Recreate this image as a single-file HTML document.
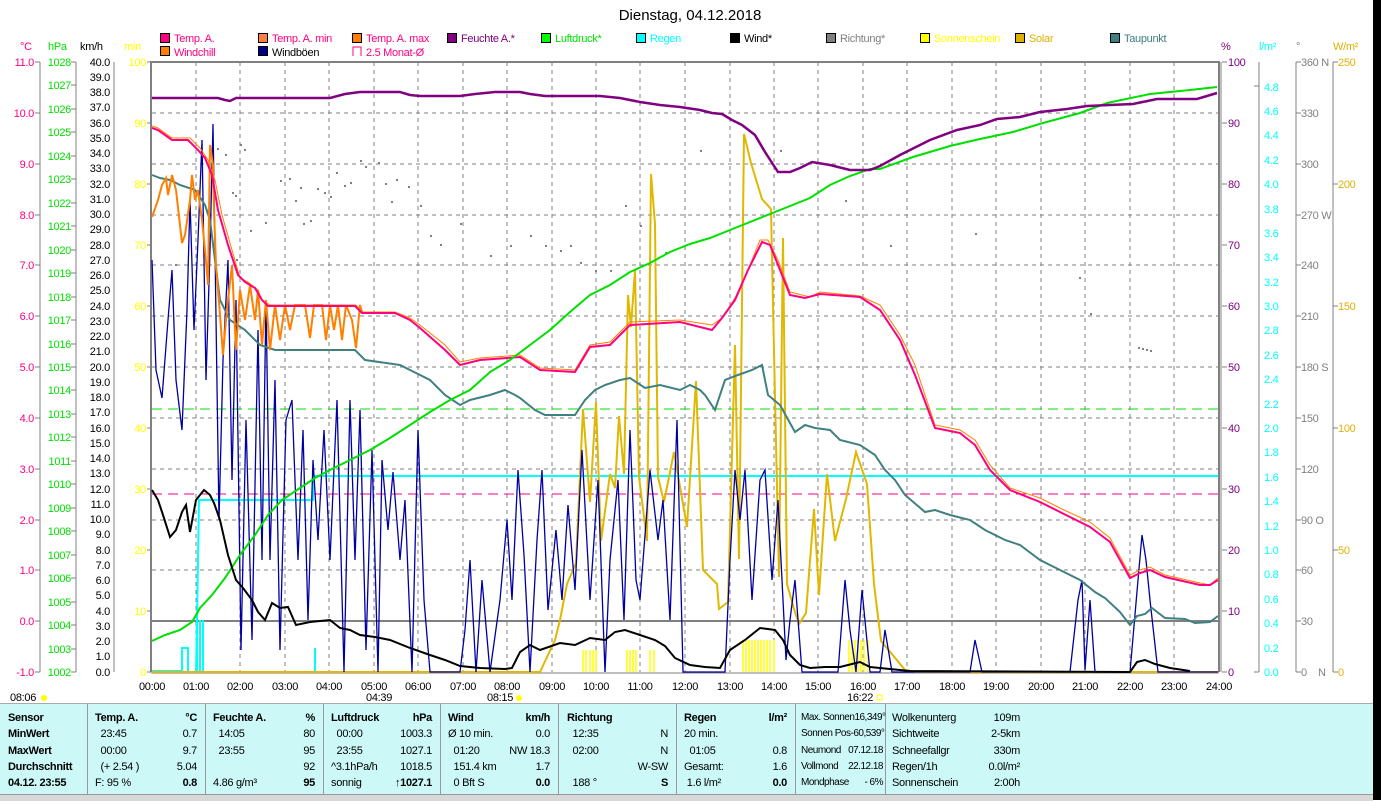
<!DOCTYPE html>
<html><head><meta charset="utf-8"><style>
html,body{margin:0;padding:0;background:#fff;width:1381px;height:800px;overflow:hidden;font-family:"Liberation Sans",sans-serif}
svg{display:block}
text{font-family:"Liberation Sans",sans-serif;font-size:11px;letter-spacing:-0.3px}
.tb{position:absolute;left:0;top:703px;width:1373px;height:90px;background:#ccf8f8;border-top:1px solid #aaa}
.c{position:absolute;top:0;height:90px;font-size:11px;line-height:16.3px;padding-top:6px;box-sizing:border-box;border-right:1px solid #999;letter-spacing:-0.3px}
.r{display:flex;justify-content:space-between;white-space:pre}
.b{font-weight:bold}
</style></head><body>
<div style="position:absolute;left:1373px;top:0;width:8px;height:800px;background:#000"></div>
<svg width="1373" height="703" style="position:absolute;left:0;top:0">
<text x="690" y="20" text-anchor="middle" style="font-size:15px;letter-spacing:0">Dienstag, 04.12.2018</text>
<g stroke="#000" stroke-width="1">
<rect x="160.5" y="33.5" width="9" height="9" fill="#ff0080"/><rect x="258.5" y="33.5" width="9" height="9" fill="#ff8040"/><rect x="352.5" y="33.5" width="9" height="9" fill="#ff8000"/><rect x="447.5" y="33.5" width="9" height="9" fill="#800080"/><rect x="541.5" y="33.5" width="9" height="9" fill="#00ff00"/><rect x="636.5" y="33.5" width="9" height="9" fill="#00ffff"/><rect x="730.5" y="33.5" width="9" height="9" fill="#000"/><rect x="826.5" y="33.5" width="9" height="9" fill="#808080"/><rect x="920.5" y="33.5" width="9" height="9" fill="#ffff00"/><rect x="1015.5" y="33.5" width="9" height="9" fill="#e0b000"/><rect x="1110.5" y="33.5" width="9" height="9" fill="#408080"/>
<rect x="160.5" y="46.5" width="9" height="9" fill="#ff8000"/><rect x="258.5" y="46.5" width="9" height="9" fill="#000080"/>
</g>
<path d="M353 56V47h8v9" fill="none" stroke="#ff0080"/>
<g>
<text x="174" y="42" fill="#ff0080">Temp. A.</text><text x="272" y="42" fill="#ff0080">Temp. A. min</text><text x="366" y="42" fill="#ff0080">Temp. A. max</text><text x="461" y="42" fill="#800080">Feuchte A.*</text><text x="555" y="42" fill="#00e000">Luftdruck*</text><text x="650" y="42" fill="#00ffff">Regen</text><text x="744" y="42">Wind*</text><text x="840" y="42" fill="#808080">Richtung*</text><text x="934" y="42" fill="#ffff00">Sonnenschein</text><text x="1029" y="42" fill="#e0b000">Solar</text><text x="1124" y="42" fill="#408080">Taupunkt</text>
<text x="174" y="56" fill="#ff0080">Windchill</text><text x="272" y="56">Windböen</text><text x="366" y="56" fill="#ff0080">2.5 Monat-Ø</text>
</g>
<text x="20" y="50" fill="#ff0080">°C</text><text x="48" y="50" fill="#00e000">hPa</text><text x="80" y="50">km/h</text><text x="124" y="50" fill="#ffff00">min</text>
<text x="1221" y="50" fill="#800080">%</text><text x="1259" y="50" fill="#00ffff">l/m²</text><text x="1296" y="50" fill="#808080">°</text><text x="1333" y="50" fill="#e0b000">W/m²</text>
<g stroke="#808080" stroke-dasharray="4,4" stroke-width="1">
<path d="M152 113H1218M152 164H1218M152 215H1218M152 265H1218M152 316H1218M152 367H1218M152 418H1218M152 469H1218M152 520H1218M152 570H1218"/>
<path d="M196 62V672M240 62V672M285 62V672M329 62V672M374 62V672M418 62V672M463 62V672M507 62V672M552 62V672M596 62V672M640 62V672M685 62V672M730 62V672M774 62V672M818 62V672M863 62V672M907 62V672M952 62V672M996 62V672M1041 62V672M1085 62V672M1130 62V672M1174 62V672"/>
</g>
<path d="M152 621H1218" stroke="#808080" stroke-width="2"/>
<path d="M152 409H1218" stroke="#00e000" stroke-dasharray="10,6"/>
<path d="M152 494H1218" stroke="#ff0080" stroke-dasharray="10,6"/>
<path d="M151 672V62H1219V672" fill="none" stroke="#808080" stroke-width="2"/>
<path d="M1221 62V672" stroke="#808080" stroke-width="1"/>
<path d="M151 673H1219" stroke="#808080" stroke-width="1"/>
<g stroke="#808080" fill="none"><path d="M40 62V672M35 62h5M35 113h5M35 164h5M35 215h5M35 265h5M35 316h5M35 367h5M35 418h5M35 469h5M35 520h5M35 570h5M35 621h5M35 672h5"/>
<path d="M76 62V672M71 62h5M71 85h5M71 109h5M71 132h5M71 156h5M71 179h5M71 203h5M71 226h5M71 250h5M71 273h5M71 297h5M71 320h5M71 344h5M71 367h5M71 390h5M71 414h5M71 437h5M71 461h5M71 484h5M71 508h5M71 531h5M71 555h5M71 578h5M71 602h5M71 625h5M71 649h5M71 672h5"/>
<path d="M114 62V672"/>
<path d="M147 62h4M147 123h4M147 184h4M147 245h4M147 306h4M147 367h4M147 428h4M147 489h4M147 550h4M147 611h4M147 672h4"/>
<path d="M1222 62h5M1222 123h5M1222 184h5M1222 245h5M1222 306h5M1222 367h5M1222 428h5M1222 489h5M1222 550h5M1222 611h5M1222 672h5"/>
<path d="M1259 62V672M1254 86h5M1254 672h5"/><path d="M1296 62V672M1296 62h5M1296 113h5M1296 164h5M1296 215h5M1296 265h5M1296 316h5M1296 367h5M1296 418h5M1296 469h5M1296 520h5M1296 570h5M1296 621h5M1296 672h5"/><path d="M1333 62V672M1333 62h5M1333 184h5M1333 306h5M1333 428h5M1333 550h5M1333 672h5"/>
</g>
<g text-anchor="end" fill="#ff0080">
<text x="34" y="66">11.0</text><text x="34" y="117">10.0</text><text x="34" y="168">9.0</text><text x="34" y="219">8.0</text><text x="34" y="269">7.0</text><text x="34" y="320">6.0</text><text x="34" y="371">5.0</text><text x="34" y="422">4.0</text><text x="34" y="473">3.0</text><text x="34" y="524">2.0</text><text x="34" y="574">1.0</text><text x="34" y="625">0.0</text><text x="34" y="676">-1.0</text>
</g>
<g text-anchor="end" fill="#00e000" style="font-size:10.5px">
<text x="71" y="66">1028</text><text x="71" y="89">1027</text><text x="71" y="113">1026</text><text x="71" y="136">1025</text><text x="71" y="160">1024</text><text x="71" y="183">1023</text><text x="71" y="207">1022</text><text x="71" y="230">1021</text><text x="71" y="254">1020</text><text x="71" y="277">1019</text><text x="71" y="301">1018</text><text x="71" y="324">1017</text><text x="71" y="348">1016</text><text x="71" y="371">1015</text><text x="71" y="394">1014</text><text x="71" y="418">1013</text><text x="71" y="441">1012</text><text x="71" y="465">1011</text><text x="71" y="488">1010</text><text x="71" y="512">1009</text><text x="71" y="535">1008</text><text x="71" y="559">1007</text><text x="71" y="582">1006</text><text x="71" y="606">1005</text><text x="71" y="629">1004</text><text x="71" y="653">1003</text><text x="71" y="676">1002</text>
</g>
<g text-anchor="end" style="font-size:10.5px">
<text x="110" y="66">40.0</text><text x="110" y="81">39.0</text><text x="110" y="96">38.0</text><text x="110" y="111">37.0</text><text x="110" y="127">36.0</text><text x="110" y="142">35.0</text><text x="110" y="157">34.0</text><text x="110" y="172">33.0</text><text x="110" y="188">32.0</text><text x="110" y="203">31.0</text><text x="110" y="218">30.0</text><text x="110" y="233">29.0</text><text x="110" y="249">28.0</text><text x="110" y="264">27.0</text><text x="110" y="279">26.0</text><text x="110" y="294">25.0</text><text x="110" y="310">24.0</text><text x="110" y="325">23.0</text><text x="110" y="340">22.0</text><text x="110" y="355">21.0</text><text x="110" y="371">20.0</text><text x="110" y="386">19.0</text><text x="110" y="401">18.0</text><text x="110" y="416">17.0</text><text x="110" y="432">16.0</text><text x="110" y="447">15.0</text><text x="110" y="462">14.0</text><text x="110" y="477">13.0</text><text x="110" y="493">12.0</text><text x="110" y="508">11.0</text><text x="110" y="523">10.0</text><text x="110" y="538">9.0</text><text x="110" y="554">8.0</text><text x="110" y="569">7.0</text><text x="110" y="584">6.0</text><text x="110" y="599">5.0</text><text x="110" y="615">4.0</text><text x="110" y="630">3.0</text><text x="110" y="645">2.0</text><text x="110" y="660">1.0</text><text x="110" y="676">0.0</text>
</g>
<g text-anchor="end" fill="#ffff00">
<text x="146" y="66">100</text><text x="146" y="127">90</text><text x="146" y="188">80</text><text x="146" y="249">70</text><text x="146" y="310">60</text><text x="146" y="371">50</text><text x="146" y="432">40</text><text x="146" y="493">30</text><text x="146" y="554">20</text><text x="146" y="615">10</text><text x="146" y="676">0</text>
</g>
<g fill="#800080">
<text x="1228" y="66">100</text><text x="1228" y="127">90</text><text x="1228" y="188">80</text><text x="1228" y="249">70</text><text x="1228" y="310">60</text><text x="1228" y="371">50</text><text x="1228" y="432">40</text><text x="1228" y="493">30</text><text x="1228" y="554">20</text><text x="1228" y="615">10</text><text x="1228" y="676">0</text>
</g>
<g fill="#00ffff">
<text x="1264" y="91">4.8</text><text x="1264" y="115">4.6</text><text x="1264" y="139">4.4</text><text x="1264" y="164">4.2</text><text x="1264" y="188">4.0</text><text x="1264" y="213">3.8</text><text x="1264" y="237">3.6</text><text x="1264" y="261">3.4</text><text x="1264" y="286">3.2</text><text x="1264" y="310">3.0</text><text x="1264" y="334">2.8</text><text x="1264" y="359">2.6</text><text x="1264" y="383">2.4</text><text x="1264" y="408">2.2</text><text x="1264" y="432">2.0</text><text x="1264" y="456">1.8</text><text x="1264" y="481">1.6</text><text x="1264" y="505">1.4</text><text x="1264" y="530">1.2</text><text x="1264" y="554">1.0</text><text x="1264" y="578">0.8</text><text x="1264" y="603">0.6</text><text x="1264" y="627">0.4</text><text x="1264" y="652">0.2</text><text x="1264" y="676">0.0</text>
</g>
<g fill="#808080">
<text x="1301" y="66">360 N</text><text x="1301" y="117">330</text><text x="1301" y="168">300</text><text x="1301" y="219">270 W</text><text x="1301" y="269">240</text><text x="1301" y="320">210</text><text x="1301" y="371">180 S</text><text x="1301" y="422">150</text><text x="1301" y="473">120</text><text x="1301" y="524">90  O</text><text x="1301" y="574">60</text><text x="1301" y="625">30</text><text x="1301" y="676">0</text><text x="1318" y="676">N</text>
</g>
<g fill="#e0b000">
<text x="1338" y="66">250</text><text x="1338" y="188">200</text><text x="1338" y="310">150</text><text x="1338" y="432">100</text><text x="1338" y="554">50</text><text x="1338" y="676">0</text>
</g>
<g text-anchor="middle">
<text x="152" y="690">00:00</text><text x="196" y="690">01:00</text><text x="240" y="690">02:00</text><text x="285" y="690">03:00</text><text x="329" y="690">04:00</text><text x="374" y="690">05:00</text><text x="418" y="690">06:00</text><text x="463" y="690">07:00</text><text x="507" y="690">08:00</text><text x="552" y="690">09:00</text><text x="596" y="690">10:00</text><text x="640" y="690">11:00</text><text x="685" y="690">12:00</text><text x="730" y="690">13:00</text><text x="774" y="690">14:00</text><text x="818" y="690">15:00</text><text x="863" y="690">16:00</text><text x="907" y="690">17:00</text><text x="952" y="690">18:00</text><text x="996" y="690">19:00</text><text x="1041" y="690">20:00</text><text x="1085" y="690">21:00</text><text x="1130" y="690">22:00</text><text x="1174" y="690">23:00</text><text x="1219" y="690">24:00</text>
</g>
<text x="10" y="701">08:06</text><circle cx="44" cy="698" r="3" fill="#ffff00"/>
<text x="366" y="701">04:39</text><text x="487" y="701">08:15</text><circle cx="519" cy="698" r="3" fill="#ffff00"/><text x="847" y="701">16:22</text><rect x="877" y="695" width="5" height="5" fill="none" stroke="#ffff00"/>
<g fill="#808080">
<rect x="217" y="148" width="2" height="2"/><rect x="225" y="154" width="2" height="2"/><rect x="240" y="144" width="2" height="2"/><rect x="244" y="149" width="2" height="2"/><rect x="235" y="195" width="2" height="2"/><rect x="236" y="259" width="2" height="2"/><rect x="232" y="192" width="2" height="2"/><rect x="175" y="264" width="2" height="2"/><rect x="250" y="230" width="2" height="2"/><rect x="265" y="222" width="2" height="2"/><rect x="280" y="180" width="2" height="2"/><rect x="289" y="178" width="2" height="2"/><rect x="300" y="187" width="2" height="2"/><rect x="295" y="200" width="2" height="2"/><rect x="303" y="223" width="2" height="2"/><rect x="310" y="220" width="2" height="2"/><rect x="317" y="188" width="2" height="2"/><rect x="324" y="192" width="2" height="2"/><rect x="330" y="196" width="2" height="2"/><rect x="336" y="172" width="2" height="2"/><rect x="344" y="185" width="2" height="2"/><rect x="350" y="182" width="2" height="2"/><rect x="360" y="160" width="2" height="2"/><rect x="365" y="166" width="2" height="2"/><rect x="378" y="162" width="2" height="2"/><rect x="385" y="183" width="2" height="2"/><rect x="391" y="201" width="2" height="2"/><rect x="396" y="179" width="2" height="2"/><rect x="408" y="186" width="2" height="2"/><rect x="420" y="205" width="2" height="2"/><rect x="430" y="235" width="2" height="2"/><rect x="440" y="244" width="2" height="2"/><rect x="460" y="223" width="2" height="2"/><rect x="490" y="255" width="2" height="2"/><rect x="510" y="245" width="2" height="2"/><rect x="530" y="235" width="2" height="2"/><rect x="545" y="245" width="2" height="2"/><rect x="560" y="250" width="2" height="2"/><rect x="570" y="245" width="2" height="2"/><rect x="580" y="262" width="2" height="2"/><rect x="595" y="270" width="2" height="2"/><rect x="610" y="270" width="2" height="2"/><rect x="625" y="205" width="2" height="2"/><rect x="640" y="225" width="2" height="2"/><rect x="665" y="252" width="2" height="2"/><rect x="700" y="150" width="2" height="2"/><rect x="780" y="150" width="2" height="2"/><rect x="845" y="200" width="2" height="2"/><rect x="890" y="245" width="2" height="2"/><rect x="975" y="233" width="2" height="2"/><rect x="1079" y="277" width="2" height="2"/><rect x="1090" y="313" width="2" height="2"/><rect x="1138" y="347" width="2" height="2"/><rect x="1142" y="348" width="2" height="2"/><rect x="1146" y="349" width="2" height="2"/><rect x="1150" y="350" width="2" height="2"/>
</g>
<g stroke="#ffff00" stroke-width="1.5">
<path d="M583 650V672M586 650V672M590 650V672M593 650V672M596 650V672M627 650V672M630 650V672M633 650V672M636 650V672M650 650V672M654 650V672M743 640V672M746 640V672M749 640V672M752 640V672M755 640V672M758 640V672M761 640V672M764 640V672M767 640V672M770 640V672M774 640V672M849 640V672M852 640V672M855 640V672M858 640V672M861 640V672M864 640V672M868 640V672"/>
</g>
<polyline fill="none" stroke="#00ffff" stroke-width="2" points="152,671 182,671 182,648 188,648 188,672 196,672 197,620 199,500 205,500 240,500 270,500 313,500 313,485 315,476 1218,476"/>
<path d="M197 620V672M200 620V672M203 620V672M315 648V672" stroke="#00ffff" stroke-width="2"/>
<polyline fill="none" stroke="#e0b800" stroke-width="2" points="152,672 540,672 548,655 555,640 560,620 567,584 576,563 583,409 590,502 596,402 601,541 610,474 615,488 619,416 624,474 628,295 631,327 635,270 639,477 647,541 651,174 655,224 658,477 664,502 674,452 687,527 696,381 703,570 717,584 719,609 728,602 735,345 739,559 744,134 751,163 762,199 771,209 774,352 779,577 783,238 787,584 794,609 799,624 806,613 814,509 819,595 827,474 835,541 846,499 856,452 867,484 874,584 881,641 896,659 905,670 915,672 1218,672"/>
<polyline fill="none" stroke="#0000a0" stroke-width="1.3" points="152,260 156,370 162,398 168,320 172,270 176,380 182,430 187,310 190,200 194,330 198,240 202,140 206,380 210,250 213,124 215,250 219,520 223,360 228,260 232,480 236,300 241,650 246,420 252,640 258,330 262,560 266,300 270,560 275,380 280,650 286,420 292,400 298,560 303,430 308,620 313,460 318,540 324,430 330,560 337,400 344,672 350,400 355,560 360,410 366,650 372,450 378,672 382,460 388,530 393,472 400,560 405,500 412,672 418,430 424,600 430,672 460,672 465,630 470,560 476,672 482,580 490,672 500,600 507,520 512,600 518,470 524,555 530,672 537,540 542,470 548,610 556,530 562,600 568,505 575,590 582,450 590,600 598,480 605,672 610,560 618,480 624,620 630,430 636,580 640,600 650,470 658,540 663,500 670,620 677,420 683,672 725,672 730,560 735,470 740,520 745,470 752,600 760,480 765,470 772,580 778,500 786,660 790,620 795,580 802,672 838,672 845,580 850,630 856,672 862,590 870,672 880,672 885,630 892,672 970,672 975,640 982,672 1070,672 1078,600 1082,580 1085,670 1090,600 1095,672 1130,672 1138,580 1142,535 1146,560 1150,600 1158,672 1218,672"/>
<polyline fill="none" stroke="#408080" stroke-width="2" points="152,175 160,178 170,180 180,185 195,190 205,205 210,220 220,300 230,320 245,330 260,345 275,350 290,350 355,350 365,360 400,365 410,370 430,380 445,395 460,405 470,400 490,395 505,390 515,395 520,398 535,410 545,415 575,415 585,400 595,390 605,385 620,380 630,378 645,388 660,385 680,390 690,385 700,390 705,395 715,410 725,380 738,375 752,370 762,365 768,395 780,405 795,432 805,425 815,428 830,430 840,440 860,445 875,455 885,470 895,480 905,495 925,512 935,510 950,515 970,520 985,530 1005,540 1020,545 1040,560 1060,570 1080,580 1095,592 1105,598 1120,612 1130,625 1137,616 1145,614 1152,608 1165,618 1185,619 1195,623 1210,622 1218,616"/>
<polyline fill="none" stroke="#ff8000" stroke-width="2" points="152,217 158,200 162,185 166,178 168,195 172,175 176,190 180,225 182,243 185,235 190,200 192,175 195,200 198,190 202,220 205,250 208,285 210,145 213,165 214,210 216,265 220,315 223,355 226,320 228,300 232,265 236,350 240,290 245,320 250,285 255,320 258,290 262,345 266,300 270,350 275,305 280,340 285,305 290,330 295,305 305,305 310,338 314,305 322,305 326,340 330,305 334,330 338,305 342,340 346,305 352,320 356,348 360,305 362,312"/>
<polyline fill="none" stroke="#ff8000" stroke-width="1" points="152,126 158,128 165,133 172,138 190,138 200,148 208,160 215,180 222,215 232,250 240,278 248,282 258,290 262,300 270,305 290,305 356,305 362,312 395,312 410,318 420,325 445,345 460,362 480,358 520,355 540,368 575,370 590,345 610,342 630,322 680,320 712,325 722,318 735,298 748,270 760,240 768,240 778,260 790,292 810,297 820,292 860,296 880,305 900,335 915,365 935,425 960,430 975,440 990,465 1010,488 1040,498 1060,508 1090,522 1110,538 1130,575 1140,570 1150,567 1165,575 1200,583 1210,585 1218,578"/>
<polyline fill="none" stroke="#ff0080" stroke-width="2" points="152,128 158,130 165,135 172,140 188,140 198,150 205,158 212,175 218,210 228,245 238,275 245,282 255,288 262,300 268,306 290,306 355,306 362,313 395,313 410,320 420,328 445,350 460,365 480,360 520,357 540,370 575,372 590,347 610,345 630,325 680,322 712,330 722,318 735,300 748,270 762,242 770,245 778,265 790,295 805,298 820,294 860,297 880,310 900,340 915,375 935,428 960,433 975,445 990,470 1010,490 1040,502 1060,512 1090,527 1110,542 1130,578 1140,573 1150,570 1165,577 1200,585 1210,585 1218,580"/>
<polyline fill="none" stroke="#00e000" stroke-width="2" points="152,641 165,635 180,630 192,622 200,608 212,595 225,578 240,555 255,535 268,515 282,500 300,488 315,478 330,470 350,460 370,450 390,438 410,425 430,412 450,400 470,390 490,372 510,360 530,345 550,330 570,312 590,295 610,285 630,272 650,263 670,252 690,244 710,238 730,230 750,222 770,214 790,206 810,198 830,185 850,176 870,169 880,169 913,157 950,146 980,139 1013,132 1043,123 1080,113 1107,103 1150,94 1190,90 1217,87"/>
<polyline fill="none" stroke="#800080" stroke-width="2.5" points="152,98 218,98 225,100 230,101 236,98 330,98 345,94 360,92 400,92 410,95 420,96 460,96 475,94 495,92 520,92 530,94 545,96 600,96 620,98 640,102 660,105 680,107 700,110 712,113 722,114 732,120 742,125 755,135 765,152 778,172 790,172 800,168 812,162 830,165 850,170 870,170 880,166 900,155 930,140 957,130 980,125 997,119 1020,117 1040,112 1067,109 1087,106 1133,104 1157,99 1197,99 1217,93"/>
<polyline fill="none" stroke="#000" stroke-width="2" points="152,490 158,500 163,515 170,537 176,530 182,512 186,505 190,532 196,500 204,490 210,495 214,503 220,520 228,555 236,580 243,588 252,600 258,612 265,620 272,603 280,608 288,607 296,625 310,622 330,620 340,628 350,630 360,635 375,637 390,640 410,648 430,655 445,660 460,666 480,668 505,669 512,668 520,652 530,645 540,650 560,643 575,645 590,638 605,640 615,632 625,630 640,635 655,640 665,646 675,658 690,665 705,667 720,668 730,650 745,640 760,628 775,630 783,640 790,655 800,665 810,668 825,667 840,667 852,664 860,662 870,667 890,669 910,671 1130,672 1137,662 1145,660 1155,664 1170,668 1190,671"/>
</svg>
<div class="tb">
<div class="c b" style="left:0;width:88px;padding-left:8px"><div>Sensor</div><div>MinWert</div><div>MaxWert</div><div>Durchschnitt</div><div>04.12. 23:55</div></div>
<div class="c" style="left:88px;width:118px;padding:6px 8px 0 7px"><div class="r b"><span>Temp. A.</span><span>°C</span></div><div class="r"><span>  23:45</span><span>0.7</span></div><div class="r"><span>  00:00</span><span>9.7</span></div><div class="r"><span>  (+ 2.54 )</span><span>5.04</span></div><div class="r"><span>F: 95 %</span><span class="b">0.8</span></div></div>
<div class="c" style="left:206px;width:118px;padding:6px 8px 0 7px"><div class="r b"><span>Feuchte A.</span><span>%</span></div><div class="r"><span>  14:05</span><span>80</span></div><div class="r"><span>  23:55</span><span>95</span></div><div class="r"><span></span><span>92</span></div><div class="r"><span>4.86 g/m³</span><span class="b">95</span></div></div>
<div class="c" style="left:324px;width:117px;padding:6px 8px 0 7px"><div class="r b"><span>Luftdruck</span><span>hPa</span></div><div class="r"><span>  00:00</span><span>1003.3</span></div><div class="r"><span>  23:55</span><span>1027.1</span></div><div class="r"><span>^3.1hPa/h</span><span>1018.5</span></div><div class="r"><span>sonnig</span><span class="b">↑1027.1</span></div></div>
<div class="c" style="left:441px;width:118px;padding:6px 8px 0 7px"><div class="r b"><span>Wind</span><span>km/h</span></div><div class="r"><span>Ø 10 min.</span><span>0.0</span></div><div class="r"><span>  01:20</span><span>NW 18.3</span></div><div class="r"><span>  151.4 km</span><span>1.7</span></div><div class="r"><span>  0 Bft S</span><span class="b">0.0</span></div></div>
<div class="c" style="left:559px;width:118px;padding:6px 8px 0 8px"><div class="r b"><span>Richtung</span><span></span></div><div class="r"><span>  12:35</span><span>N</span></div><div class="r"><span>  02:00</span><span>N</span></div><div class="r"><span></span><span>W-SW</span></div><div class="r"><span>  188 °</span><span class="b">S</span></div></div>
<div class="c" style="left:677px;width:119px;padding:6px 8px 0 7px"><div class="r b"><span>Regen</span><span>l/m²</span></div><div class="r"><span>20 min.</span><span></span></div><div class="r"><span>  01:05</span><span>0.8</span></div><div class="r"><span>Gesamt:</span><span>1.6</span></div><div class="r"><span> 1.6 l/m²</span><span class="b">0.0</span></div></div>
<div class="c" style="left:796px;width:90px;padding:6px 2px 0 5px;font-size:10px;letter-spacing:-0.5px"><div class="r"><span>Max. Sonnen</span><span>16,349°</span></div><div class="r"><span>Sonnen Pos</span><span>-60,539°</span></div><div class="r"><span>Neumond</span><span>07.12.18</span></div><div class="r"><span>Vollmond</span><span>22.12.18</span></div><div class="r"><span>Mondphase</span><span>- 6%</span></div></div>
<div class="c" style="left:886px;width:160px;padding:6px 0 0 6px;border-right:none"><div class="r" style="width:128px"><span>Wolkenunterg</span><span>109m</span></div><div class="r" style="width:128px"><span>Sichtweite</span><span>2-5km</span></div><div class="r" style="width:128px"><span>Schneefallgr</span><span>330m</span></div><div class="r" style="width:128px"><span>Regen/1h</span><span>0.0l/m²</span></div><div class="r" style="width:128px"><span>Sonnenschein</span><span>2:00h</span></div></div>
</div>
<div style="position:absolute;left:0;top:794px;width:1373px;height:6px;background:#d8d8d8;border-top:1px solid #999"></div>
</body></html>
